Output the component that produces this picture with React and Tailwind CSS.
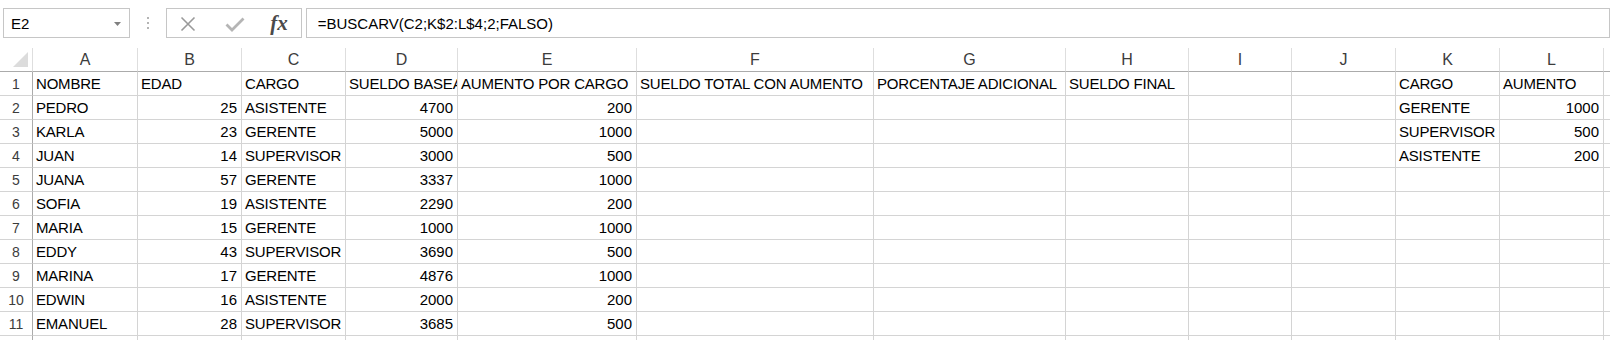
import React from "react";

// Columnas de la hoja (M queda cortada por el borde derecho)
const COLS = ["A", "B", "C", "D", "E", "F", "G", "H", "I", "J", "K", "L", "M"];

const FILAS = [
  ["NOMBRE", "EDAD", "CARGO", "SUELDO BASEA", "AUMENTO POR CARGO", "SUELDO TOTAL CON AUMENTO", "PORCENTAJE ADICIONAL", "SUELDO FINAL", "", "", "CARGO", "AUMENTO", ""],
  ["PEDRO", 25, "ASISTENTE", 4700, 200, "", "", "", "", "", "GERENTE", 1000, ""],
  ["KARLA", 23, "GERENTE", 5000, 1000, "", "", "", "", "", "SUPERVISOR", 500, ""],
  ["JUAN", 14, "SUPERVISOR", 3000, 500, "", "", "", "", "", "ASISTENTE", 200, ""],
  ["JUANA", 57, "GERENTE", 3337, 1000, "", "", "", "", "", "", "", ""],
  ["SOFIA", 19, "ASISTENTE", 2290, 200, "", "", "", "", "", "", "", ""],
  ["MARIA", 15, "GERENTE", 1000, 1000, "", "", "", "", "", "", "", ""],
  ["EDDY", 43, "SUPERVISOR", 3690, 500, "", "", "", "", "", "", "", ""],
  ["MARINA", 17, "GERENTE", 4876, 1000, "", "", "", "", "", "", "", ""],
  ["EDWIN", 16, "ASISTENTE", 2000, 200, "", "", "", "", "", "", "", ""],
  ["EMANUEL", 28, "SUPERVISOR", 3685, 500, "", "", "", "", "", "", "", ""],
  ["", "", "", "", "", "", "", "", "", "", "", "", ""],
];

function BarraFormulas() {
  return (
    <div className="flex h-[48px] pt-[8px]">
      {/* Cuadro de nombres */}
      <div className="ml-[3px] w-[128px] h-[30px] border border-[#c6c6c6] flex items-center justify-between pl-[7px] pr-[8px]">
        <span className="leading-[26px] pt-[2px]">E2</span>
        <svg width="7" height="4" viewBox="0 0 7 4" className="mt-[2px]">
          <polygon points="0,0 7,0 3.5,4" fill="#808080" />
        </svg>
      </div>

      {/* Separador de puntos */}
      <div className="w-[37px] flex flex-col items-center justify-center gap-[3px] h-[30px]">
        <div className="w-[2px] h-[2px] bg-[#b4b4b4]" />
        <div className="w-[2px] h-[2px] bg-[#b4b4b4]" />
        <div className="w-[2px] h-[2px] bg-[#b4b4b4]" />
      </div>

      {/* Cancelar / introducir / insertar función */}
      <div className="w-[137px] h-[30px] border border-[#c6c6c6] flex items-center pl-[13px]">
        <svg width="16" height="16" viewBox="0 0 16 16" className="mt-[2px]">
          <path d="M1.5 1.5L14.5 14.5M14.5 1.5L1.5 14.5" stroke="#9a9a9a" strokeWidth="1.6" fill="none" />
        </svg>
        <svg width="20" height="15" viewBox="0 0 20 15" className="ml-[29px] mt-[2px]">
          <path d="M1.5 7.5L7 13L18.5 1.5" stroke="#b5b5b5" strokeWidth="2.8" fill="none" />
        </svg>
        <span className="ml-[25px] font-['Liberation_Serif',serif] italic font-bold text-[21px] text-[#4a4a4a] leading-[26px]">
          fx
        </span>
      </div>

      {/* Contenido de la celda */}
      <div className="ml-[4px] w-[1320px] h-[30px] border border-[#c6c6c6] flex items-center pl-[11px]">
        <span className="leading-[26px] pt-[2px] whitespace-nowrap">=BUSCARV(C2;K$2:L$4;2;FALSO)</span>
      </div>
    </div>
  );
}

export default function App() {
  return (
    <div className="w-[1610px] h-[340px] overflow-hidden bg-white text-black text-[15px] font-['Liberation_Sans',Arial,sans-serif]">
      <BarraFormulas />

      <div className="grid w-max grid-cols-[33px_105px_104px_104px_112px_179px_237px_192px_123px_103px_104px_104px_104px_104px]">
        {/* Esquina con triángulo */}
        <div className="h-[24px] border-r border-b border-r-[#dedede] border-b-[#ababab] flex items-end justify-end pr-[4px] pb-[4px]">
          <svg width="15" height="15" viewBox="0 0 15 15">
            <polygon points="15,0 15,15 0,15" fill="#dcdcdc" />
          </svg>
        </div>

        {/* Cabeceras de columna */}
        {COLS.map((c) => (
          <div
            key={c}
            className="h-[24px] border-r border-b border-r-[#dedede] border-b-[#ababab] text-center text-[16px] text-[#3c3c3c] leading-[22px] pt-[1px]"
          >
            {c}
          </div>
        ))}

        {FILAS.map((fila, i) => (
          <React.Fragment key={i}>
            <div className="h-[24px] border-r border-b border-r-[#ababab] border-b-[#d4d4d4] text-center text-[14px] text-[#3c3c3c] leading-[22px] pt-[1px]">
              {i < 11 ? i + 1 : ""}
            </div>
            {fila.map((v, j) => (
              <div
                key={j}
                className={
                  typeof v === "number"
                    ? "h-[24px] border-r border-b border-[#d4d4d4] overflow-hidden whitespace-nowrap text-right pr-[4px] leading-[22px] pt-[1px]"
                    : "h-[24px] border-r border-b border-[#d4d4d4] overflow-hidden whitespace-nowrap pl-[3px] leading-[22px] pt-[1px] tracking-[-0.2px]"
                }
              >
                {v}
              </div>
            ))}
          </React.Fragment>
        ))}
      </div>
    </div>
  );
}
